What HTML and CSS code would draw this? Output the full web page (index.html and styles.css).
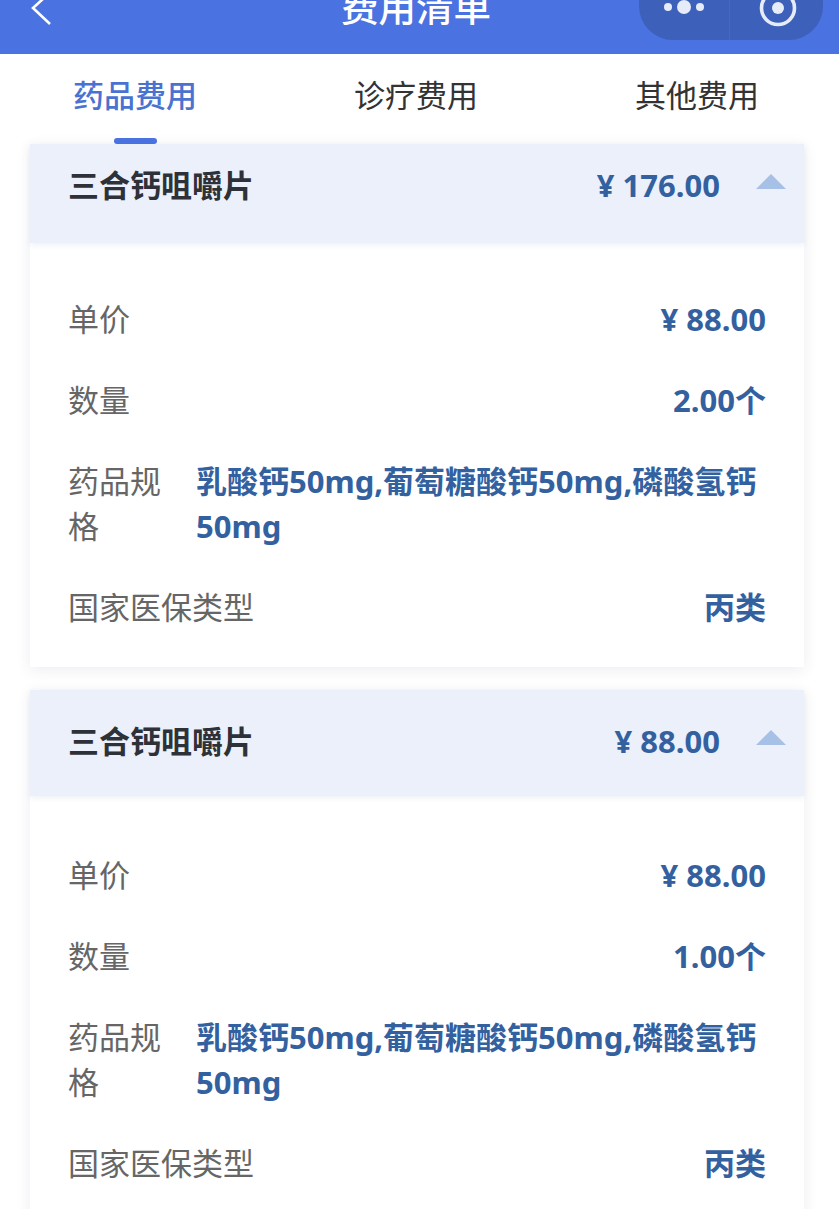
FILE: index.html
```html
<!DOCTYPE html>
<html lang="zh">
<head>
<meta charset="utf-8">
<title>费用清单</title>
<link rel="stylesheet" href="styles.css">
</head>
<body>
<header class="nav">
  <svg class="back" viewBox="0 0 24 32" aria-hidden="true"><path d="M15-2 4 8l17 16" fill="none" stroke="#fff" stroke-width="2.6"/></svg>
  <h1 class="nav-title">费用清单</h1>
  <div class="capsule">
    <div class="cap-part"><svg class="cap-dots" viewBox="0 0 42 16" aria-hidden="true"><circle cx="5" cy="8" r="4" fill="#e6ebf8"/><circle cx="21" cy="8" r="7" fill="#e6ebf8"/><circle cx="37" cy="8" r="4" fill="#e6ebf8"/></svg></div>
    <div class="cap-part cap-right"><svg class="cap-target" viewBox="0 0 40 40" aria-hidden="true"><circle cx="20" cy="20" r="16.5" fill="none" stroke="#e6ebf8" stroke-width="3.6"/><circle cx="20" cy="20" r="6" fill="#e6ebf8"/></svg></div>
  </div>
</header>
<nav class="tabs">
  <div class="tab tab-active">药品费用</div>
  <div class="tab">诊疗费用</div>
  <div class="tab">其他费用</div>
</nav>
<main class="list">
  <section class="card card-first">
    <div class="card-head">
      <span class="drug">三合钙咀嚼片</span>
      <span class="total">¥ 176.00</span>
      <span class="arrow"></span>
    </div>
    <div class="card-body">
      <div class="row"><span class="label">单价</span><span class="value">¥ 88.00</span></div>
      <div class="row"><span class="label">数量</span><span class="value">2.00个</span></div>
      <div class="row"><span class="label label-narrow">药品规格</span><span class="value value-long">乳酸钙50mg,葡萄糖酸钙50mg,磷酸氢钙50mg</span></div>
      <div class="row"><span class="label">国家医保类型</span><span class="value">丙类</span></div>
    </div>
  </section>
  <section class="card">
    <div class="card-head">
      <span class="drug">三合钙咀嚼片</span>
      <span class="total">¥ 88.00</span>
      <span class="arrow"></span>
    </div>
    <div class="card-body">
      <div class="row"><span class="label">单价</span><span class="value">¥ 88.00</span></div>
      <div class="row"><span class="label">数量</span><span class="value">1.00个</span></div>
      <div class="row"><span class="label label-narrow">药品规格</span><span class="value value-long">乳酸钙50mg,葡萄糖酸钙50mg,磷酸氢钙50mg</span></div>
      <div class="row"><span class="label">国家医保类型</span><span class="value">丙类</span></div>
    </div>
  </section>
</main>
</body>
</html>
```
FILE: styles.css
```css
* { box-sizing: border-box; margin: 0; padding: 0; }
html, body { height: 100%; }
body {
  width: 839px;
  height: 1209px;
  overflow: hidden;
  background: #fff;
  font-family: "Noto Sans", "Noto Sans CJK SC", sans-serif;
  font-size: 31px;
  color: #666;
}
.nav {
  position: relative;
  height: 54px;
  background: #4a72e0;
  overflow: hidden;
}
.back { position: absolute; left: 29px; top: 0; width: 24px; height: 32px; }
.nav-title {
  position: absolute;
  left: 0; right: 7px;
  top: -16px;
  text-align: center;
  font-size: 37.5px;
  line-height: 46px;
  font-weight: 500;
  color: #fff;
}
.capsule {
  position: absolute;
  left: 639px;
  top: -40px;
  width: 184px;
  height: 80px;
  border-radius: 34px;
  background: #3d60bb;
  display: flex;
}
.cap-part { flex: 1; display: flex; justify-content: center; align-items: flex-end; padding-bottom: 25px; }
.cap-right { border-left: 1px solid #4668c4; padding-left: 3px; }
.cap-dots { width: 42px; height: 16px; }
.cap-target { width: 40px; height: 40px; margin-bottom: -13px; }
.tabs {
  height: 90px;
  display: flex;
  justify-content: space-between;
  padding: 0 80px 0 73px;
}
.tab {
  position: relative;
  padding-top: 19px;
  line-height: 44px;
  color: #333;
  width: 124px;
  text-align: center;
}
.tab-active { color: #4a72d0; font-weight: 500; }
.tab-active::after {
  content: "";
  position: absolute;
  left: 41px;
  bottom: 0;
  width: 43px;
  height: 6px;
  border-radius: 3px;
  background: #4a72e0;
}
.list { padding: 0 35px 0 30px; display: flex; flex-direction: column; gap: 23px; }
.card { background: #fff; box-shadow: 0 3px 14px rgba(40, 60, 110, 0.09); }
.card-head {
  height: 106px;
  padding: 29px 18px 0 38px;
  background: #ebf0fb;
  display: flex;
  align-items: flex-start;
  box-shadow: 0 2px 6px rgba(40, 60, 110, 0.08);
  position: relative;
}
.card-first .card-head { height: 99px; padding-top: 19px; }
.drug { font-weight: 700; color: #2e3138; line-height: 44px; flex: 1; }
.total { font-weight: 700; color: #33619f; line-height: 44px; }
.arrow {
  width: 0; height: 0;
  margin: 11px 0 0 36px;
  border-left: 15px solid transparent;
  border-right: 15px solid transparent;
  border-bottom: 15px solid #a7c0e6;
}
.card-body { padding: 57px 38px 1px; }
.card-first .card-body { padding-top: 54px; }
.row { display: flex; justify-content: space-between; margin-bottom: 36px; line-height: 45px; }
.label { flex-shrink: 0; color: #666; }
.label-narrow { width: 98px; margin-right: 30px; }
.value { font-weight: 700; color: #33619f; text-align: right; }
.value-long { text-align: left; flex: 1; }
```
